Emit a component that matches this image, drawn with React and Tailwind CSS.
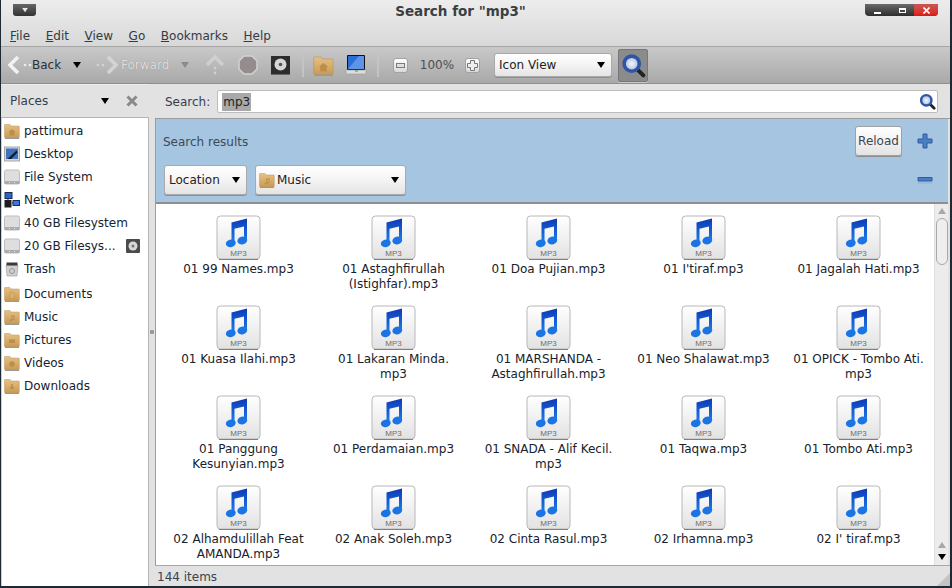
const files = [
  ['01 99 Names.mp3'],
  ['01 Astaghfirullah', '(Istighfar).mp3'],
  ['01 Doa Pujian.mp3'],
  ["01 I'tiraf.mp3"],
  ['01 Jagalah Hati.mp3'],
  ['01 Kuasa Ilahi.mp3'],
  ['01 Lakaran Minda.', 'mp3'],
  ['01 MARSHANDA -', 'Astaghfirullah.mp3'],
  ['01 Neo Shalawat.mp3'],
  ['01 OPICK - Tombo Ati.', 'mp3'],
  ['01 Panggung', 'Kesunyian.mp3'],
  ['01 Perdamaian.mp3'],
  ['01 SNADA - Alif Kecil.', 'mp3'],
  ['01 Taqwa.mp3'],
  ['01 Tombo Ati.mp3'],
  ['02 Alhamdulillah Feat', 'AMANDA.mp3'],
  ['02 Anak Soleh.mp3'],
  ['02 Cinta Rasul.mp3'],
  ['02 Irhamna.mp3'],
  ["02 I' tiraf.mp3"],
];

function Arrow({ className = 'text-black' }) {
  return (
    <svg width="8" height="6" viewBox="0 0 8 6" className={className}>
      <path d="M0 0h8L4 6z" fill="currentColor" />
    </svg>
  );
}

function Mp3Icon() {
  return (
    <svg width="46" height="46" viewBox="0 0 46 46">
      <defs>
        <linearGradient id="note" x1="0" y1="0" x2="0" y2="1">
          <stop offset="0" stopColor="#0e38b4" />
          <stop offset="1" stopColor="#1c84f0" />
        </linearGradient>
        <linearGradient id="page" x1="0" y1="0" x2="0" y2="1">
          <stop offset="0" stopColor="#ffffff" />
          <stop offset="1" stopColor="#e2e2e2" />
        </linearGradient>
      </defs>
      <rect x="1" y="1" width="43" height="43" rx="3.5" fill="url(#page)" stroke="#b8b8b8" />
      <path d="M3 44.5h39" stroke="#808080" />
      <path d="M15.500 7.500 31 3.500v22h-3V11.500l-9.500 2.300V28.500h-3z" fill="url(#note)" />
      <ellipse cx="14.800" cy="28.300" rx="5" ry="3.800" transform="rotate(-15 14.800 28.300)" fill="#1a74e4" />
      <ellipse cx="26.300" cy="25.500" rx="5" ry="3.800" transform="rotate(-15 26.300 25.500)" fill="#1a74e4" />
      <text x="22.500" y="41" textAnchor="middle" fontSize="8" fill="#6e6e6e" fontFamily="Liberation Sans, sans-serif">MP3</text>
    </svg>
  );
}

function Folder({ glyph, size = 16 }) {
  return (
    <svg width={size} height={size} viewBox="0 0 16 16" className="shrink-0">
      <defs>
        <linearGradient id="folder" x1="0" y1="0" x2="0" y2="1">
          <stop offset="0" stopColor="#e6c184" />
          <stop offset="1" stopColor="#c89a55" />
        </linearGradient>
      </defs>
      <path d="M1 1.500h5l1 1.500h7.500q.8 0 .8.8V14q0 1-1 1H1.500q-1 0-1-1V2q0-.5.5-.5z" fill="url(#folder)" stroke="#b8965e" strokeWidth=".5" />
      <path d="M1 15.500h14" stroke="#999" />
      {glyph === 'home' && <path d="M8 6 11.500 9H10.500V12.500H5.500V9H4.500z" fill="#bb8f4a" />}
      {glyph === 'doc' && <path d="M6 6h3l1.500 1.500v5H6z" fill="#d9b06e" stroke="#bb8f4c" strokeWidth=".5" />}
      {glyph === 'music' && <path d="M7 7 10.500 6v4.500a1.200 1 0 1 1-.8-1V7.500L7.800 8.100v3.400a1.200 1 0 1 1-.8-1z" fill="#bb8f4a" />}
      {glyph === 'pic' && <path d="M5 7.500h6V11H5z" fill="#bb8f4a" />}
      {glyph === 'video' && <circle cx="8" cy="9" r="2.800" fill="#bb8f4a" />}
      {glyph === 'down' && <path d="M7.200 6h1.600v3H10.500L8 12 5.500 9H7.200z" fill="#bb8f4a" />}
    </svg>
  );
}

function Drive() {
  return (
    <svg width="16" height="16" viewBox="0 0 16 16" className="shrink-0">
      <rect x=".5" y="1" width="15" height="14" rx="1.500" fill="#dedede" stroke="#bdbdbd" />
      <rect x=".5" y="12" width="15" height="3" fill="#acacac" />
      <path d="M5 13.500h1M10 13.500h1" stroke="#e8e8e8" />
    </svg>
  );
}

function DesktopIcon() {
  return (
    <svg width="16" height="16" viewBox="0 0 16 16" className="shrink-0">
      <rect x=".5" y="1" width="15" height="14" fill="#d4d7dc" stroke="#a8a8a8" />
      <rect x="2" y="2.500" width="12" height="10.500" fill="#3f72bc" />
      <path d="M3.500 13 12.500 4.500 13.500 6.500 7 13z" fill="#101828" />
    </svg>
  );
}

function NetworkIcon() {
  return (
    <svg width="16" height="16" viewBox="0 0 16 16" className="shrink-0">
      <rect x="1" y="0.500" width="7" height="6" fill="#2b63c4" stroke="#1a2c55" />
      <rect x="0.500" y="8" width="7" height="7.500" fill="#1f1f1f" />
      <rect x="9" y="8.500" width="6.500" height="5" fill="#3b78d8" stroke="#1a2c55" />
      <path d="M4 7v2M8 11h1" stroke="#222" />
    </svg>
  );
}

function TrashIcon() {
  return (
    <svg width="16" height="16" viewBox="0 0 16 16" className="shrink-0">
      <path d="M2 4h12l-1 11H3z" fill="#cfcfcf" stroke="#a0a0a0" strokeWidth=".7" />
      <path d="M2.500 1.500h11v3h-11z" fill="#3a3a3a" />
      <circle cx="8" cy="10" r="2.500" fill="none" stroke="#969696" />
    </svg>
  );
}

function Eject({ size = 14 }) {
  return (
    <span className="flex items-center justify-center rounded-[1px] bg-[#4b4b4b] shrink-0" style={{ width: size, height: size }}>
      <svg width="10" height="10" viewBox="0 0 10 10">
        <circle cx="5" cy="5" r="4.500" fill="#d8d8d8" />
        <circle cx="5" cy="5" r="1.500" fill="#777" />
      </svg>
    </span>
  );
}

function SearchGlass({ size = 28 }) {
  return (
    <svg width={size} height={size} viewBox="0 0 28 28">
      <defs>
        <radialGradient id="lens">
          <stop offset="0" stopColor="#f2f6fc" />
          <stop offset="1" stopColor="#a9bcd8" />
        </radialGradient>
      </defs>
      <path d="M18 18 25 25" stroke="#222" strokeWidth="4.500" strokeLinecap="round" />
      <circle cx="12" cy="12" r="8.500" fill="url(#lens)" stroke="#2f55a8" strokeWidth="4" />
    </svg>
  );
}

function PlaceRow({ icon, label, eject, mt }) {
  return (
    <div className={`flex items-center h-[23px] pl-[2px] ${mt ? 'mt-0.5' : ''}`}>
      {icon}
      <span className="ml-[4px] truncate">{label}</span>
      {eject && <span className="ml-auto mr-[8px]"><Eject /></span>}
    </div>
  );
}

function Combo({ children, className = '' }) {
  return (
    <div className={`flex items-center justify-between rounded-[3px] border border-[#a9a9a9] bg-gradient-to-b from-white via-[#f4f4f4] to-[#e4e4e4] shadow-[0_1px_0_#8f8f8f] text-[#222] ${className}`}>
      {children}
    </div>
  );
}

function WindowButtons() {
  return (
    <div className="flex h-[12px] w-[73px] rounded-b-[4px] overflow-hidden bg-gradient-to-b from-[#6b6b6b] to-[#2e2e2e]">
      <div className="flex flex-1 items-end justify-center pb-[2px]">
        <div className="h-[2px] w-[7px] bg-white" />
      </div>
      <div className="flex w-[24px] items-center justify-center">
        <div className="h-[5px] w-[7px] border border-t-2 border-white" />
      </div>
      <div className="flex w-[24px] items-center justify-center bg-gradient-to-b from-[#c45850] to-[#e01010]">
        <svg width="7" height="7" viewBox="0 0 7 7"><path d="M.5.5l6 6M6.500.5l-6 6" stroke="#fff" strokeWidth="1.600" /></svg>
      </div>
    </div>
  );
}

export default function App() {
  const menus = [['F', 'ile'], ['E', 'dit'], ['V', 'iew'], ['G', 'o'], ['B', 'ookmarks'], ['H', 'elp']];

  return (
    <div className="relative flex flex-col w-[952px] h-[588px] overflow-hidden bg-[#e2e2e2] border-l border-r-2 border-b-2 border-[#1d2a33] font-['DejaVu_Sans',sans-serif] text-[12px] text-[#1b2733]">
      {/* Title + menu */}
      <div className="shrink-0 h-[47px] bg-gradient-to-b from-[#ededed] to-[#d8d8d8] border-b border-[#a6a6a6]">
        <div className="relative flex items-center justify-between h-[24px] pl-[12px] pr-[12px]">
          <div className="flex items-center justify-center w-[23px] h-[12px] mt-[-4px] rounded-b-[3px] bg-gradient-to-b from-[#666] to-[#333]">
            <Arrow className="text-[#e8e8e8] scale-75" />
          </div>
          <div className="absolute left-0 right-0 top-[1px] text-center font-bold text-[13.5px] text-[#3a3f45] pr-[30px]">Search for "mp3"</div>
          <div className="mt-[-4px]"><WindowButtons /></div>
        </div>
        <div className="flex items-center gap-[15.6px] pl-[9px] h-[23px]">
          {menus.map(([key, rest]) => (
            <span key={key} className="text-[#333b44]"><span className="underline">{key}</span>{rest}</span>
          ))}
        </div>
      </div>

      {/* Toolbar */}
      <div className="shrink-0 flex items-center h-[37px] bg-gradient-to-b from-[#c9c9c9] to-[#a9a9a9] border-b border-[#8e8e8e] pl-[7px]">
        <svg width="24" height="20" viewBox="0 0 24 20" className="shrink-0">
          <path d="M10 2 2 10l8 8" fill="none" stroke="#f2f2f2" strokeWidth="3.500" />
          <circle cx="17" cy="10" r="1.300" fill="#eee" /><circle cx="22" cy="10" r="1.300" fill="#eee" />
        </svg>
        <span className="text-[#2c3036] w-[40px]">Back</span>
        <span className="ml-[1px]"><Arrow /></span>
        <svg width="22" height="20" viewBox="0 0 22 20" className="ml-[15px] shrink-0">
          <path d="M12 2l8 8-8 8" fill="none" stroke="#d4d4d4" strokeWidth="3.500" />
          <circle cx="2" cy="10" r="1.300" fill="#d4d4d4" /><circle cx="7" cy="10" r="1.300" fill="#d4d4d4" />
        </svg>
        <span className="ml-[3px] w-[60px] text-[#dedede] [text-shadow:0_0_1px_#8a8a8a]">Forward</span>
        <span><Arrow className="text-[#8c8c8c]" /></span>
        <svg width="20" height="22" viewBox="0 0 20 22" className="ml-[16px] shrink-0">
          <path d="M2 11l8-8 8 8" fill="none" stroke="#cfcfcf" strokeWidth="3.500" />
          <circle cx="10" cy="14" r="1.400" fill="#cfcfcf" /><circle cx="10" cy="19" r="1.400" fill="#cfcfcf" />
        </svg>
        <svg width="20" height="20" viewBox="0 0 20 20" className="ml-[13px] shrink-0">
          <path d="M6 1h8l5 5v8l-5 5H6l-5-5V6z" fill="#958d8d" stroke="#d2d2d2" strokeWidth="1.500" />
        </svg>
        <span className="ml-[13px] flex items-center justify-center w-[19px] h-[19px] bg-[#2d2d2d] border-b border-[#666]">
          <svg width="13" height="13" viewBox="0 0 13 13"><circle cx="6.500" cy="6.500" r="6" fill="#d6d6d6" /><circle cx="6.500" cy="6.500" r="1.800" fill="#555" /></svg>
        </span>
        <span className="ml-[12px] h-[24px] w-[2px] bg-[#c4c4c4]" />
        <span className="ml-[9px]"><Folder glyph="home" size={21} /></span>
        <svg width="22" height="22" viewBox="0 0 22 22" className="ml-[11px] shrink-0">
          <rect x="2" y="1" width="18" height="15" rx="1" fill="#111" />
          <path d="M3 2h16v13H3z" fill="#2d6ed6" />
          <path d="M3 15 14 2h5v13z" fill="#5e94e8" />
          <path d="M1 16h20v3q0 1-1 1H2q-1 0-1-1z" fill="#dcdcdc" stroke="#909090" strokeWidth=".5" />
          <path d="M10 17h3" stroke="#3da13d" />
        </svg>
        <span className="ml-[10px] h-[24px] w-[2px] bg-[#c4c4c4]" />
        <span className="ml-[14px] flex items-center justify-center w-[15px] h-[15px] rounded-[3px] bg-gradient-to-b from-white to-[#d9d9d9] border border-[#a2a2a2]">
          <span className="w-[9px] h-[5px] border border-[#7a7a7a] bg-[#e0e0e0]" />
        </span>
        <span className="ml-[7px] w-[44px] text-[#4a4f55] text-center">100%</span>
        <span className="ml-[6px] flex items-center justify-center w-[15px] h-[15px] rounded-[3px] bg-gradient-to-b from-white to-[#d9d9d9] border border-[#a2a2a2]">
          <svg width="11" height="11" viewBox="0 0 11 11"><path d="M3.500.5h4v3h3v4h-3v3h-4v-3h-3v-4h3z" fill="#eee" stroke="#777" /></svg>
        </span>
        <Combo className="ml-[14px] w-[118px] h-[24px] pl-[4px] pr-[6px]">
          <span>Icon View</span>
          <Arrow />
        </Combo>
        <span className="ml-[6px] flex items-center justify-center w-[30px] h-[33px] rounded-[2px] bg-[#8b8b8b] border border-[#777] shadow-[0_1px_0_#c9c9c9]">
          <SearchGlass size={25} />
        </span>
      </div>

      <div className="flex-1 flex min-h-0">
        {/* Places sidebar */}
        <aside className="shrink-0 w-[148px] flex flex-col">
          <div className="shrink-0 flex items-center h-[33px] pl-[9px] border-t border-[#eee] text-[#33404c]">
            <span>Places</span>
            <span className="ml-[53px]"><Arrow /></span>
            <svg width="12" height="12" viewBox="0 0 12 12" className="ml-[17px]">
              <path d="M1.500 1.500l9 9M10.500 1.500l-9 9" stroke="#8a8a8a" strokeWidth="3" />
            </svg>
          </div>
          <div className="flex-1 bg-white border-t border-r border-[#b5b5b5] border-l border-l-[#d0d0d0] pt-[1px] text-[#15232f]">
            <PlaceRow icon={<Folder glyph="home" />} label="pattimura" />
            <PlaceRow icon={<DesktopIcon />} label="Desktop" />
            <PlaceRow icon={<Drive />} label="File System" />
            <PlaceRow icon={<NetworkIcon />} label="Network" />
            <PlaceRow icon={<Drive />} label="40 GB Filesystem" />
            <PlaceRow icon={<Drive />} label="20 GB Filesys..." eject />
            <PlaceRow icon={<TrashIcon />} label="Trash" />
            <PlaceRow mt icon={<Folder glyph="doc" />} label="Documents" />
            <PlaceRow icon={<Folder glyph="music" />} label="Music" />
            <PlaceRow icon={<Folder glyph="pic" />} label="Pictures" />
            <PlaceRow icon={<Folder glyph="video" />} label="Videos" />
            <PlaceRow icon={<Folder glyph="down" />} label="Downloads" />
          </div>
        </aside>

        {/* Pane grip */}
        <div className="shrink-0 w-[6px] flex items-center justify-center">
          <div className="w-[4px] h-[4px] mt-[-6px] bg-[#9a9a9a] rounded-[1px]" />
        </div>

        {/* Main column */}
        <main className="flex-1 min-w-0 flex flex-col">
          <div className="shrink-0 flex items-center h-[34px] pr-[12px] pt-[1px] text-[#33404c]">
            <span className="ml-[10px]">Search:</span>
            <div className="flex flex-1 items-center ml-[7px] h-[23px] bg-white border border-[#bcbcbc] rounded-[2px] pl-[4px] pr-[1px]">
              <span className="bg-[#a9a9a9] text-[#222] px-px">mp3</span>
              <span className="ml-auto"><SearchGlass size={17} /></span>
            </div>
          </div>

          <div className="flex-1 min-h-0 flex flex-col border-t border-l border-[#9c9c9c]">
            {/* Search bar */}
            <div className="shrink-0 flex h-[85px] mr-[2px] bg-[#a5c5e1] border-b-2 border-[#8f8f8f] pl-[8px] pr-[15px]">
              <div className="flex-1 flex flex-col">
                <div className="mt-[14px] h-[18px] -ml-px text-[#3d4a58]">Search results</div>
                <div className="flex mt-[14px] gap-[8px]">
                  <Combo className="w-[83px] h-[30px] pl-[4px] pr-[6px]">
                    <span>Location</span>
                    <Arrow />
                  </Combo>
                  <Combo className="w-[151px] h-[30px] pl-[3px] pr-[6px]">
                    <span className="flex items-center gap-[2px]"><Folder glyph="music" /> Music</span>
                    <Arrow />
                  </Combo>
                </div>
              </div>
              <div className="flex flex-col w-[78px]">
                <div className="flex items-center mt-[7px]">
                  <div className="flex items-center justify-center w-[47px] h-[30px] rounded-[3px] border border-[#a0a0a0] bg-gradient-to-b from-white to-[#e4e4e4] shadow-[0_1px_0_#8f8f8f] text-[#3d4450]">Reload</div>
                  <svg width="16" height="16" viewBox="0 0 16 16" className="ml-[15px]">
                    <path d="M6 1h4v5h5v4h-5v5H6v-5H1V6h5z" fill="#4a7fc4" stroke="#2f5d9c" />
                  </svg>
                </div>
                <svg width="16" height="10" viewBox="0 0 16 10" className="mt-[19px] ml-[62px]">
                  <path d="M1 2.500h14v3.500H1z" fill="#4a7fc4" stroke="#2f5d9c" />
                  <path d="M1 8h14" stroke="#8fb0d0" />
                </svg>
              </div>
            </div>

            {/* Icon grid */}
            <div className="flex-1 min-h-0 flex mr-[2px] bg-white overflow-hidden">
              <div className="flex-1 min-w-0 pt-[11px] pl-[5px] overflow-hidden">
                <div className="grid grid-cols-[repeat(5,155px)] auto-rows-[90px]">
                  {files.map((lines) => (
                    <div key={lines.join('')} className="flex flex-col items-center text-center text-[#17222d] leading-[15px]">
                      <Mp3Icon />
                      <div className="mt-[1px] whitespace-nowrap">
                        {lines.map((line) => <div key={line}>{line}</div>)}
                      </div>
                    </div>
                  ))}
                </div>
              </div>
              {/* Scrollbar */}
              <div className="shrink-0 w-[14px] flex flex-col items-center bg-[#ececec] border-l border-[#e0e0e0]">
                <div className="mt-[4px]"><Arrow className="text-[#a8a8a8] rotate-180" /></div>
                <div className="mt-[4px] w-[12px] h-[47px] rounded-[6px] border border-[#a8a8a8] bg-[#eeeeee]" />
                <div className="mt-auto mb-[5px] flex flex-col gap-[6px]">
                  <Arrow className="text-[#a8a8a8] rotate-180" />
                  <Arrow />
                </div>
              </div>
            </div>
          </div>

          {/* Status bar */}
          <div className="shrink-0 relative flex items-center h-[21px] pl-[2px] pt-[1px] border-t border-[#a8a8a8] text-[#38434f]">
            144 items
            <svg width="13" height="13" viewBox="0 0 13 13" className="absolute right-0 bottom-0">
              <path d="M13 0v13H0z" fill="#c4c4c4" />
            </svg>
          </div>
        </main>
      </div>
    </div>
  );
}
